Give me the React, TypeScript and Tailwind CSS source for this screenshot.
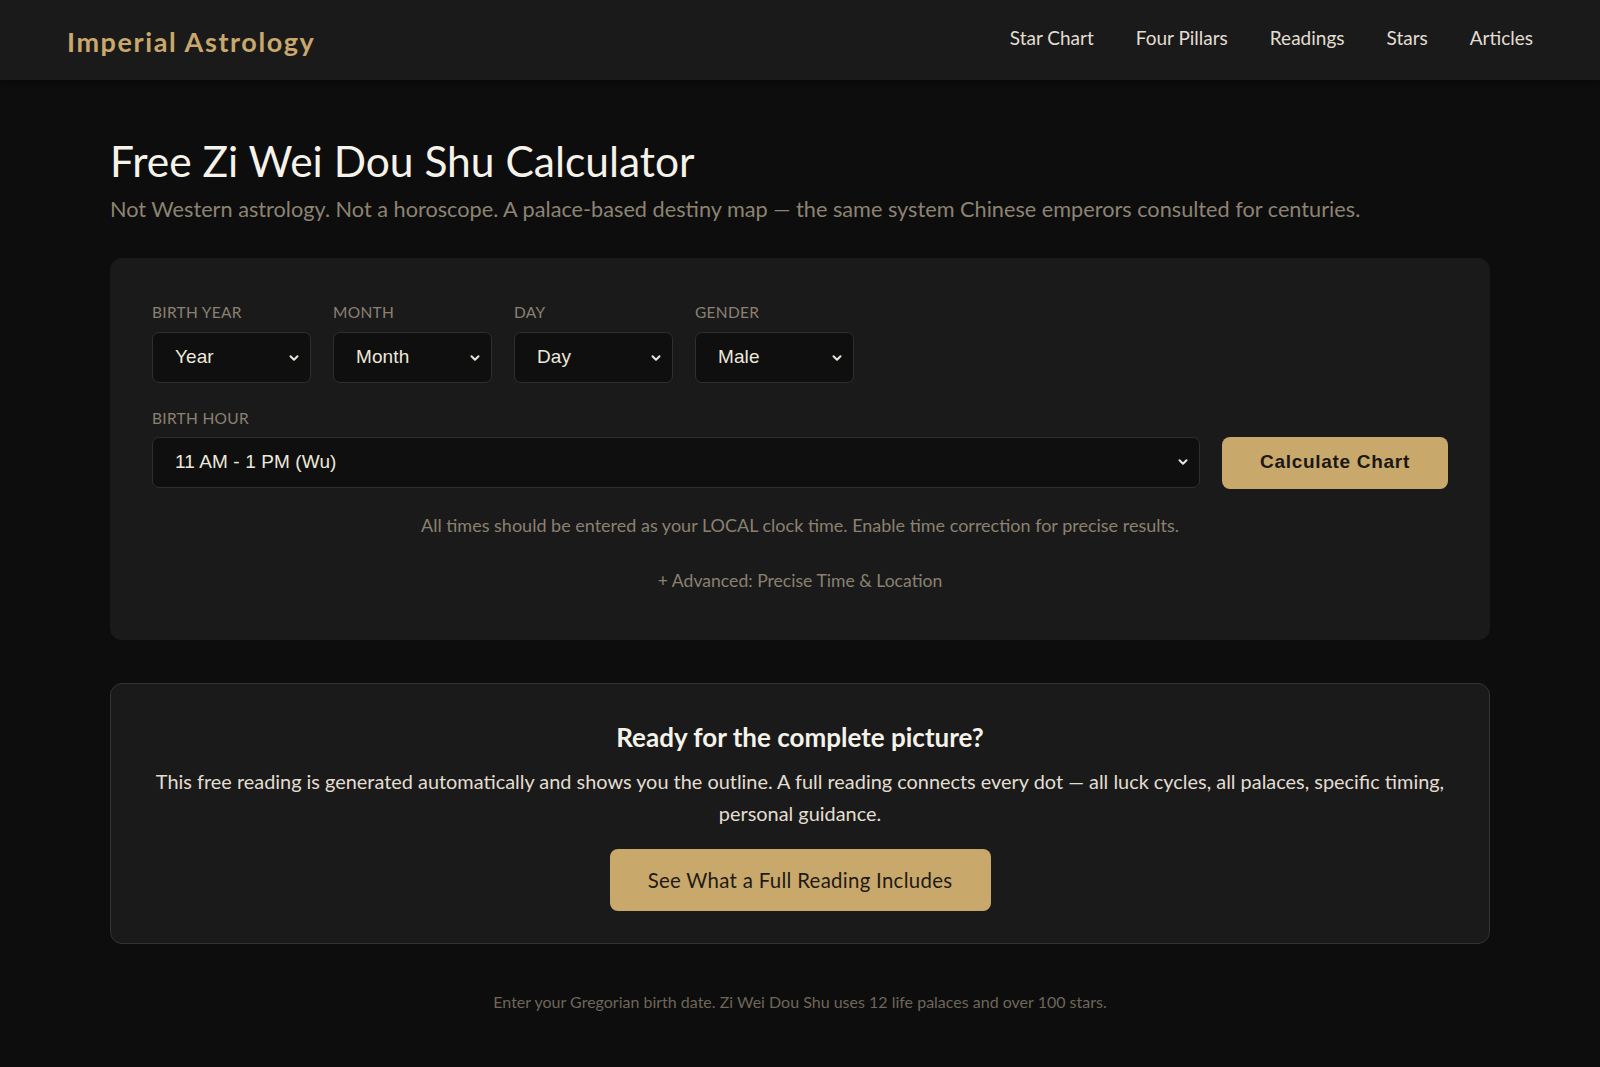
import { ChevronDown } from "lucide-react";

const navLinks = ["Star Chart", "Four Pillars", "Readings", "Stars", "Articles"];

const fieldSelects = [
  { label: "Birth Year", value: "Year" },
  { label: "Month", value: "Month" },
  { label: "Day", value: "Day" },
  { label: "Gender", value: "Male" },
];

function SelectBox({ value, className = "" }: { value: string; className?: string }) {
  return (
    <div
      className={`relative flex h-[51px] items-center rounded-[7px] border border-[#2e2e2e] bg-[#0f0f0f] pl-[22px] pr-10 ${className}`}
    >
      <span className="font-['Liberation_Sans',Arial,sans-serif] text-[19px] tracking-[0.1px] text-[#ece8dc]">
        {value}
      </span>
      <ChevronDown
        className="absolute right-[9px] top-1/2 -translate-y-1/2 text-[#e8e4d8]"
        size={14}
        strokeWidth={3.5}
      />
    </div>
  );
}

function FieldLabel({ children }: { children: string }) {
  return (
    <div className="mb-[12px] text-[15.5px] uppercase leading-none tracking-[0.3px] text-[#8a8171]">
      {children}
    </div>
  );
}

export default function App() {
  return (
    <div className="min-h-[1067px] bg-[#0d0d0d] font-['Lato','Open_Sans',sans-serif]">
      <header className="flex h-20 items-center justify-between bg-[#1a1a1a] px-[67px] shadow-[0_2px_6px_rgba(0,0,0,0.4)]">
        <div className="pt-1 text-[27px] font-bold tracking-[1.6px] text-[#c9a86b]">Imperial Astrology</div>
        <nav className="flex items-center gap-[42px] pb-1">
          {navLinks.map((link) => (
            <a key={link} className="text-[19px] text-[#e2ded2]">
              {link}
            </a>
          ))}
        </nav>
      </header>

      <main className="mx-auto w-[1380px] pt-[54px]">
        <h1 className="text-[42.5px] leading-tight text-[#f5f2ea]">Free Zi Wei Dou Shu Calculator</h1>
        <p className="mt-[6px] text-[21.7px] text-[#8c8373]">
          Not Western astrology. Not a horoscope. A palace-based destiny map — the same system Chinese emperors
          consulted for centuries.
        </p>

        <section className="mt-[32px] rounded-[12px] bg-[#1a1a1a] px-[42px] pb-[46px] pt-[47px]">
          <div className="flex gap-[22px]">
            {fieldSelects.map((f) => (
              <div key={f.label} className="w-[159px]">
                <FieldLabel>{f.label}</FieldLabel>
                <SelectBox value={f.value} />
              </div>
            ))}
          </div>

          <div className="mt-[28px]">
            <FieldLabel>Birth Hour</FieldLabel>
            <div className="-mt-[2px] flex items-start gap-[22px]">
              <SelectBox value="11 AM - 1 PM (Wu)" className="flex-1" />
              <button className="h-[52px] w-[226px] rounded-[8px] bg-[#c9a86c] font-['Liberation_Sans',Arial,sans-serif] text-[19px] font-bold tracking-[0.7px] text-[#1a1714]">
                Calculate Chart
              </button>
            </div>
          </div>

          <p className="mt-[23px] text-center text-[18px] text-[#8a8171]">
            All times should be entered as your LOCAL clock time. Enable time correction for precise results.
          </p>
          <p className="mt-[29px] text-center text-[17.6px] text-[#8a8171]">+ Advanced: Precise Time &amp; Location</p>
        </section>

        <section className="mt-[43px] rounded-[12px] border border-[#333] bg-[#1a1a1a] px-10 pb-[32px] pt-[34px] text-center">
          <h2 className="text-[26px] font-bold text-[#f5f2ea]">Ready for the complete picture?</h2>
          <p className="mt-[8px] text-[19.9px] leading-[32px] text-[#e2ded2]">
            This free reading is generated automatically and shows you the outline. A full reading connects every dot
            — all luck cycles, all palaces, specific timing, personal guidance.
          </p>
          <button className="mt-[20px] h-[62px] w-[381px] rounded-[8px] bg-[#c9a86c] text-[20.4px] tracking-[0.3px] text-[#1f1a15]">
            See What a Full Reading Includes
          </button>
        </section>

        <p className="mt-[46px] pb-10 text-center text-[16px] text-[#6d665a]">
          Enter your Gregorian birth date. Zi Wei Dou Shu uses 12 life palaces and over 100 stars.
        </p>
      </main>
    </div>
  );
}
